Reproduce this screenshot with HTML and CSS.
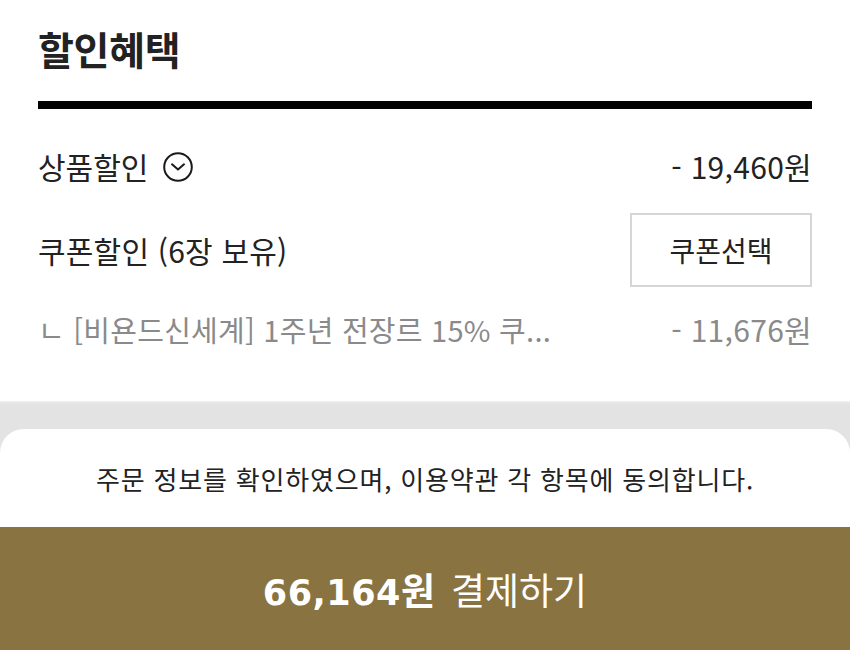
FILE: index.html
```html
<!DOCTYPE html>
<html lang="ko">
<head>
<meta charset="utf-8">
<link rel="stylesheet" href="styles.css">
</head>
<body>
<div class="page">
  <h1 class="title">할인혜택</h1>
  <div class="bar"></div>
  <div class="row row-product">
    <div class="label">상품할인
      <svg class="chev" width="30" height="30" viewBox="0 0 30 30" aria-hidden="true">
        <circle cx="15" cy="15" r="13.8" fill="none" stroke="#1a1a1a" stroke-width="2"/>
        <path d="M9 12.3 L15 17.6 L21 12.3" fill="none" stroke="#1a1a1a" stroke-width="2" stroke-linecap="round" stroke-linejoin="round"/>
      </svg>
    </div>
    <div class="amount">- 19,460원</div>
  </div>
  <div class="row row-coupon">
    <div class="label wide">쿠폰할인 (6장 보유)</div>
    <button class="coupon-btn">쿠폰선택</button>
  </div>
  <div class="row row-sub">
    <div class="label sub">ㄴ [비욘드신세계] 1주년 전장르 15% 쿠...</div>
    <div class="amount sub">- 11,676원</div>
  </div>
</div>
<div class="dock">
  <div class="sheet">
    <p class="agree">주문 정보를 확인하였으며, 이용약관 각 항목에 동의합니다.</p>
    <div class="pay"><strong><span class="num">66,164</span>원</strong> 결제하기</div>
  </div>
</div>
</body>
</html>
```

FILE: styles.css
```css
* { box-sizing: border-box; }
html, body { margin: 0; padding: 0; background: #fff; }
body {
  font-family: "Noto Sans CJK KR", "Noto Sans", sans-serif;
  color: #222;
  width: 850px;
  height: 650px;
  overflow: hidden;
}
.page { padding: 0 38px; }
.title {
  margin: 0;
  padding-top: 22px;
  height: 101px;
  font-size: 39px;
  line-height: 52px;
  font-weight: 700;
  color: #222;
  letter-spacing: -0.3px;
}
.bar { height: 8px; background: #000; }
.row {
  display: flex;
  align-items: center;
  justify-content: space-between;
}
.row-product { margin-top: 27px; height: 60px; }
.row-coupon { margin-top: 17px; height: 74px; }
.row-sub { margin-top: 22px; height: 40px; }
.label {
  font-size: 30px;
  line-height: 40px;
  display: flex;
  align-items: center;
  color: #222;
  white-space: nowrap;
}
.label.wide { letter-spacing: 0.2px; }
.chev { margin-left: 15px; margin-top: 2px; }
.amount { font-size: 30px; line-height: 40px; color: #222; letter-spacing: 0.3px; }
.label.sub { font-size: 29px; letter-spacing: 0.25px; }
.sub { color: #8a8a8a; }
.coupon-btn {
  width: 182px;
  height: 74px;
  border: 2px solid #d6d6d6;
  background: #fff;
  font-family: inherit;
  font-size: 28px;
  color: #222;
  padding: 0;
}
.dock {
  margin-top: 52px;
  background: linear-gradient(#f0f0f0 0, #e3e3e3 3px, #e4e4e4 100%);
  padding-top: 28px;
}
.sheet {
  background: #fff;
  border-radius: 24px 24px 0 0;
  overflow: hidden;
}
.agree {
  margin: 0;
  height: 98px;
  display: flex;
  align-items: center;
  justify-content: center;
  font-size: 26px;
  letter-spacing: 0.8px;
  color: #222;
}
.pay {
  height: 123px;
  background: #887341;
  color: #fff;
  display: flex;
  align-items: center;
  justify-content: center;
  font-size: 37px;
  gap: 16px;
}
.pay strong { font-weight: 700; }
.num { font-family: "DejaVu Sans", sans-serif; font-size: 35px; font-weight: 700; letter-spacing: 0.5px; }
```
